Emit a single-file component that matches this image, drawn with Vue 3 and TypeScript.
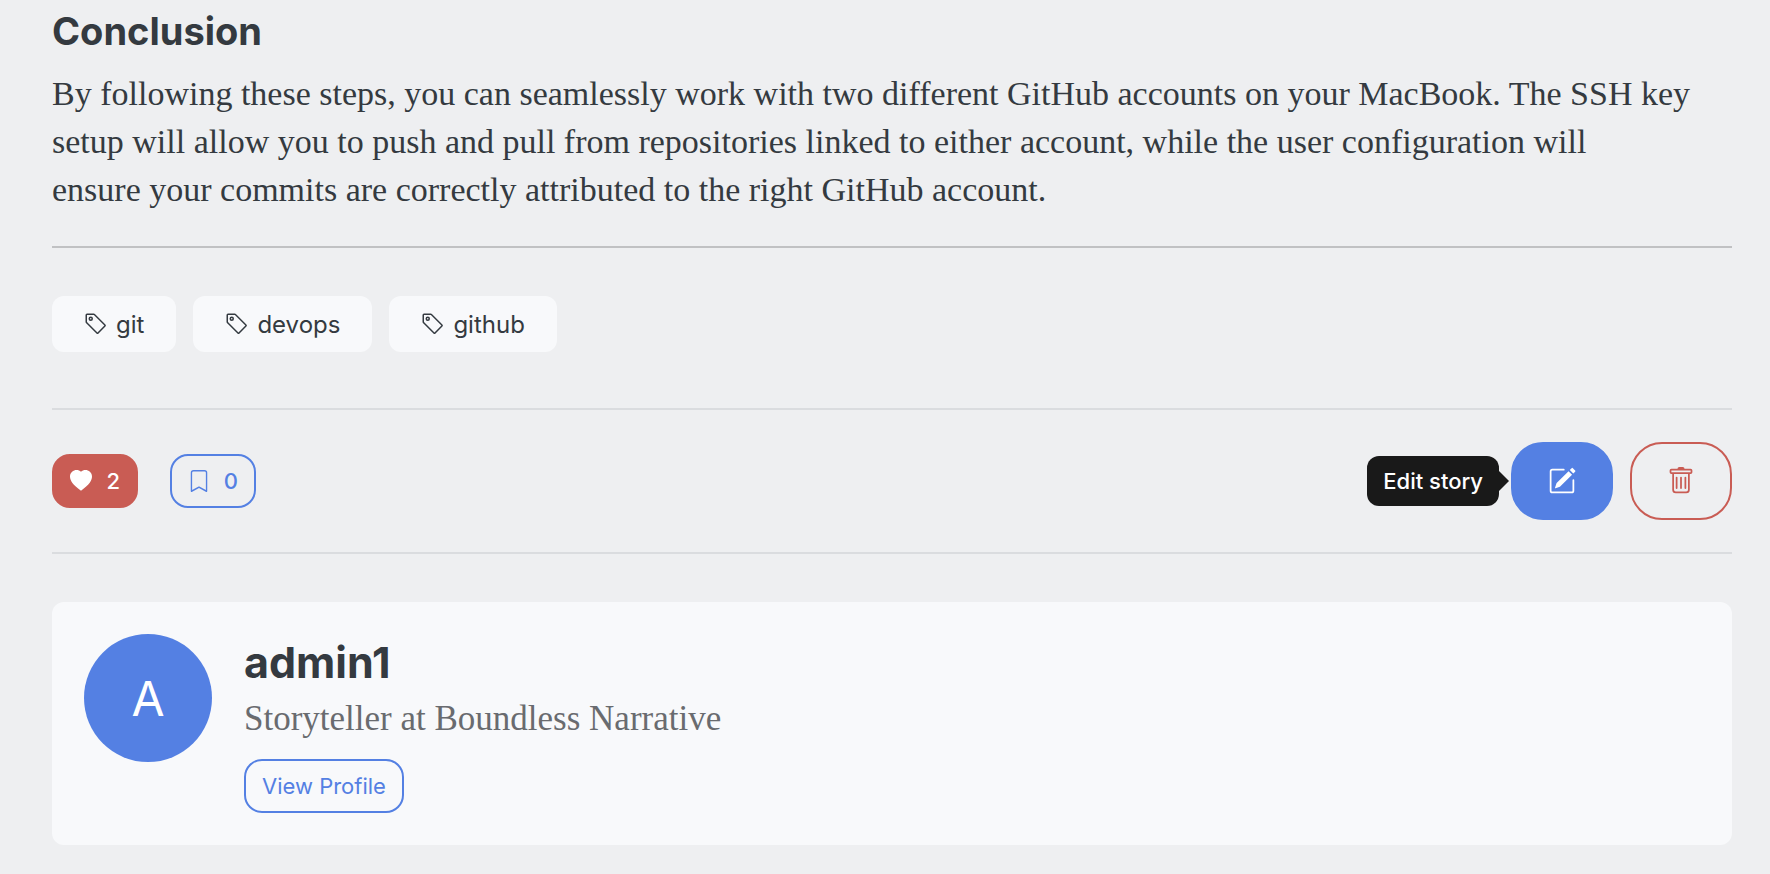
<script setup lang="ts">
interface Author {
  name: string
  bio: string
}

const tags: string[] = ['git', 'devops', 'github']
const likes = 2
const bookmarks = 0
const author: Author = { name: 'admin1', bio: 'Storyteller at Boundless Narrative' }
</script>

<template>
  <main class="story">
    <section class="body">
      <h2>Conclusion</h2>
      <p>
        By following these steps, you can seamlessly work with two different GitHub accounts on your
        MacBook. The SSH key setup will allow you to push and pull from repositories linked to either
        account, while the user configuration will<br />
        ensure your commits are correctly attributed to the right GitHub account.
      </p>
    </section>

    <nav class="tags" aria-label="Tags">
      <a v-for="tag in tags" :key="tag" class="tag" href="#">
        <svg class="icon-tag" viewBox="0 0 16 16" aria-hidden="true">
          <path d="M6 4.5a1.5 1.5 0 1 1-3 0 1.5 1.5 0 0 1 3 0m-1 0a.5.5 0 1 0-1 0 .5.5 0 0 0 1 0" />
          <path d="M2 1h4.586a1 1 0 0 1 .707.293l7 7a1 1 0 0 1 0 1.414l-4.586 4.586a1 1 0 0 1-1.414 0l-7-7A1 1 0 0 1 1 6.586V2a1 1 0 0 1 1-1m0 5.586 7 7L13.586 9l-7-7H2z" />
        </svg>
        <span>{{ tag }}</span>
      </a>
    </nav>

    <section class="actions">
      <div class="reactions">
        <button type="button" class="pill liked" aria-label="Like">
          <svg class="icon-small" viewBox="0 0 16 16" aria-hidden="true">
            <path fill-rule="evenodd" d="M8 1.314C12.438-3.248 23.534 4.735 8 15-7.534 4.736 3.562-3.248 8 1.314" />
          </svg>
          <span>{{ likes }}</span>
        </button>
        <button type="button" class="pill" aria-label="Bookmark">
          <svg class="icon-small" viewBox="0 0 16 16" aria-hidden="true">
            <path d="M2 2a2 2 0 0 1 2-2h8a2 2 0 0 1 2 2v13.5a.5.5 0 0 1-.777.416L8 13.101l-5.223 2.815A.5.5 0 0 1 2 15.5zm2-1a1 1 0 0 0-1 1v12.566l4.723-2.482a.5.5 0 0 1 .554 0L13 14.566V2a1 1 0 0 0-1-1z" />
          </svg>
          <span>{{ bookmarks }}</span>
        </button>
      </div>
      <div class="manage">
        <div class="edit-wrap">
          <span id="edit-tip" class="tooltip" role="tooltip">Edit story</span>
          <button type="button" class="manage-button edit" aria-labelledby="edit-tip">
            <svg class="icon-large" viewBox="0 0 16 16" aria-hidden="true">
              <path d="M15.502 1.94a.5.5 0 0 1 0 .706L14.459 3.69l-2-2L13.502.646a.5.5 0 0 1 .707 0l1.293 1.293zm-1.75 2.456-2-2L4.939 9.21a.5.5 0 0 0-.121.196l-.805 2.414a.25.25 0 0 0 .316.316l2.414-.805a.5.5 0 0 0 .196-.12l6.813-6.814z" />
              <path fill-rule="evenodd" d="M1 13.5A1.5 1.5 0 0 0 2.5 15h11a1.5 1.5 0 0 0 1.5-1.5v-6a.5.5 0 0 0-1 0v6a.5.5 0 0 1-.5.5h-11a.5.5 0 0 1-.5-.5v-11a.5.5 0 0 1 .5-.5H9a.5.5 0 0 0 0-1H2.5A1.5 1.5 0 0 0 1 2.5z" />
            </svg>
          </button>
        </div>
        <button type="button" class="manage-button delete" aria-label="Delete">
          <svg class="icon-large" viewBox="0 0 16 16" aria-hidden="true">
            <path d="M5.5 5.5A.5.5 0 0 1 6 6v6a.5.5 0 0 1-1 0V6a.5.5 0 0 1 .5-.5m2.5 0a.5.5 0 0 1 .5.5v6a.5.5 0 0 1-1 0V6a.5.5 0 0 1 .5-.5m3 .5a.5.5 0 0 0-1 0v6a.5.5 0 0 0 1 0z" />
            <path d="M14.5 3a1 1 0 0 1-1 1H13v9a2 2 0 0 1-2 2H5a2 2 0 0 1-2-2V4h-.5a1 1 0 0 1-1-1V2a1 1 0 0 1 1-1H6a1 1 0 0 1 1-1h2a1 1 0 0 1 1 1h3.5a1 1 0 0 1 1 1zM4.118 4 4 4.059V13a1 1 0 0 0 1 1h6a1 1 0 0 0 1-1V4.059L11.882 4zM2.5 3h11V2h-11z" />
          </svg>
        </button>
      </div>
    </section>

    <section class="author">
      <div class="avatar" aria-hidden="true">A</div>
      <div class="author-info">
        <h3>{{ author.name }}</h3>
        <p>{{ author.bio }}</p>
        <a class="profile" href="#">View Profile</a>
      </div>
    </section>
  </main>
</template>

<style>
body {
  margin: 0;
  background: #eeeff1;
}
</style>

<style scoped>
.story {
  --blue: #5480e3;
  --red: #c95c54;
  --ink: #343a40;
  --serif: Georgia, "Liberation Serif", serif;
  box-sizing: border-box;
  padding: 8px 38px 28px 52px;
  color: var(--ink);
  font-family: Inter, "Liberation Sans", sans-serif;
  font-size: 24px;
}

.body {
  padding-bottom: 32px;
  border-bottom: 2px solid #c0c1c3;
}

h2,
h3 {
  margin: 0;
  font-weight: 700;
}

h2 {
  margin-bottom: 16px;
  font-size: 38px;
  line-height: 46px;
}

p {
  margin: 0;
  font-family: var(--serif);
  font-size: 34px;
  line-height: 48px;
}

.tags {
  display: flex;
  flex-wrap: wrap;
  gap: 17px;
  padding: 48px 0 56px;
}

.tag {
  display: flex;
  align-items: center;
  gap: 8px;
  height: 56px;
  padding: 0 32px;
  border-radius: 12px;
  background: #f8f9fb;
  color: var(--ink);
  text-decoration: none;
}

svg {
  display: block;
  flex: none;
  fill: currentColor;
}

.icon-tag {
  width: 24px;
  height: 24px;
}

.icon-small {
  width: 22px;
  height: 22px;
}

.icon-large {
  width: 28px;
  height: 28px;
}

.actions {
  display: flex;
  align-items: center;
  justify-content: space-between;
  padding: 32px 0;
  border-top: 2px solid #dadcdf;
  border-bottom: 2px solid #dadcdf;
}

.reactions {
  display: flex;
  gap: 32px;
}

button {
  box-sizing: border-box;
  margin: 0;
  border: 2px solid var(--blue);
  background: transparent;
  color: var(--blue);
  font: inherit;
  cursor: pointer;
}

.pill {
  display: flex;
  align-items: center;
  justify-content: space-between;
  width: 86px;
  height: 54px;
  padding: 0 16px;
  border-radius: 18px;
  font-size: 22px;
  font-weight: 500;
}

.liked {
  border-color: var(--red);
  background: var(--red);
  color: #fff;
}

.manage {
  display: flex;
  gap: 17px;
}

.edit-wrap {
  position: relative;
}

.manage-button {
  display: flex;
  align-items: center;
  justify-content: center;
  width: 102px;
  height: 78px;
  padding: 0;
  border-radius: 32px;
}

.edit {
  background: var(--blue);
  color: #fff;
}

.delete {
  border-color: var(--red);
  color: var(--red);
}

.tooltip {
  position: absolute;
  top: 50%;
  right: calc(100% + 12px);
  transform: translateY(-50%);
  padding: 0 16px;
  border-radius: 12px;
  background: #191919;
  color: #fff;
  font-size: 22px;
  font-weight: 500;
  line-height: 50px;
  white-space: nowrap;
}

.tooltip::after {
  content: "";
  position: absolute;
  top: 50%;
  left: 100%;
  transform: translateY(-50%);
  border: 10px solid transparent;
  border-right: 0;
  border-left-color: #191919;
}

.author {
  display: flex;
  align-items: flex-start;
  gap: 32px;
  margin-top: 48px;
  padding: 32px;
  border-radius: 12px;
  background: #f8f9fb;
}

.avatar {
  display: flex;
  flex: none;
  align-items: center;
  justify-content: center;
  width: 128px;
  height: 128px;
  border-radius: 50%;
  background: var(--blue);
  color: #fff;
  font-size: 48px;
}

h3 {
  margin-bottom: 5px;
  font-size: 43px;
  line-height: 56px;
}

.author-info p {
  margin-bottom: 16px;
  color: #696b6f;
  font-size: 35px;
}

.profile {
  display: inline-block;
  box-sizing: border-box;
  padding: 0 16px;
  border: 2px solid var(--blue);
  border-radius: 18px;
  color: var(--blue);
  font-size: 22px;
  line-height: 50px;
  text-decoration: none;
}
</style>
